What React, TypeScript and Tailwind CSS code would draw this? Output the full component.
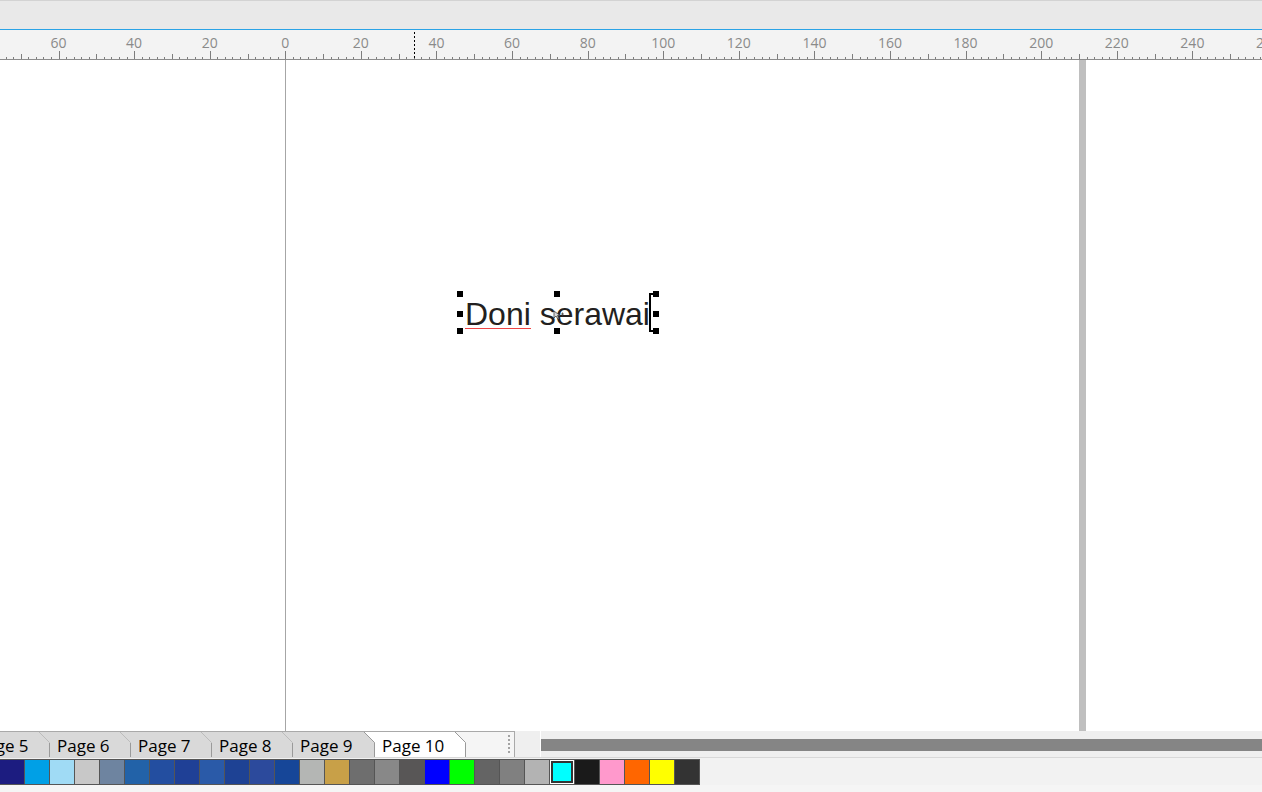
import React from "react";

const ORIGIN = 285.3;
const UNIT = 3.7795;

const labels: number[] = [];
for (let v = -60; v <= 260; v += 20) labels.push(v);

const ticks: number[] = [];
for (let v = -76; v <= 264; v += 2) ticks.push(v);

const tabs = [
  { label: "Page 5", w: 81, cls: "w-[92px]" },
  { label: "Page 6", w: 81, cls: "w-[92px]" },
  { label: "Page 7", w: 81, cls: "w-[92px]" },
  { label: "Page 8", w: 81, cls: "w-[92px]" },
  { label: "Page 9", w: 82, cls: "w-[93px]" },
  { label: "Page 10", w: 91, cls: "w-[102px]", active: true },
];

const swatches = [
  "#1c1c80", "#00a0e6", "#a0dbf5", "#c8c8c8", "#6e84a0", "#2262a8", "#234ea0",
  "#1f4096", "#2a5aa8", "#1e4294", "#2c4a9c", "#164698", "#b4b6b4", "#c8a048",
  "#6e6e6e", "#888888", "#585656", "#0000ff", "#00ff00", "#646464", "#808080",
  "#b3b3b3", "#00ffff", "#1a1a1a", "#ff99cc", "#ff6600", "#ffff00", "#333333",
];

function Ruler() {
  return (
    <div className="relative h-[30px] bg-[#f3f3f3] border-b border-[#8c8c8c] overflow-hidden font-['Open_Sans',sans-serif]">
      <svg className="absolute inset-0" width={1262} height={30}>
        {ticks.map((v) => {
          const x = Math.round(ORIGIN + UNIT * v) + 0.5;
          const h = v % 20 === 0 ? 9 : v % 10 === 0 ? 6 : 3;
          return <line key={v} x1={x} x2={x} y1={30 - h} y2={30} stroke="#7d7d7d" strokeWidth={1} />;
        })}
        <line x1={414.5} x2={414.5} y1={2} y2={30} stroke="#000" strokeWidth={1} strokeDasharray="2 2" />
      </svg>
      {labels.map((v) => (
        <span
          key={v}
          className="absolute top-[6px] -translate-x-1/2 text-[14px] leading-none text-[#8a8a8a]"
          style={{ left: ORIGIN + UNIT * v }}
        >
          {Math.abs(v)}
        </span>
      ))}
    </div>
  );
}

function Handle({ className }: { className: string }) {
  return <div className={`absolute w-[6px] h-[6px] bg-black ${className}`} />;
}

function Canvas() {
  return (
    <div className="relative flex-1 bg-white overflow-hidden">
      <div className="absolute left-[285px] top-0 bottom-0 w-px bg-[#a6a6a6]" />
      <div className="absolute left-[1079px] top-0 bottom-0 w-[7px] bg-[#bfbfbf]" />

      <span className="absolute left-[465px] top-[238px] text-[32px] leading-none text-[#231f20] font-['Liberation_Sans',Arial,sans-serif] whitespace-nowrap">
        Doni serawai
      </span>
      <div className="absolute left-[465px] top-[268px] w-[66px] h-px bg-[#ee4444]" />

      <Handle className="left-[457px] top-[231px]" />
      <Handle className="left-[554px] top-[231px]" />
      <Handle className="left-[653px] top-[231px]" />
      <Handle className="left-[457px] top-[251px]" />
      <Handle className="left-[653px] top-[251px]" />
      <Handle className="left-[457px] top-[268px]" />
      <Handle className="left-[554px] top-[268px]" />
      <Handle className="left-[653px] top-[268px]" />

      <div className="absolute left-[649px] top-[233px] w-[5px] h-[39px] border-l-2 border-t-2 border-b-2 border-black" />

      <svg className="absolute left-[553px] top-[250px]" width={12} height={10} viewBox="0 0 12 10">
        <path d="M1 1 L1 8 L3 6 L5 9 L6 8.5 L4.5 5.5 L7 5.5 Z" fill="#d9d9d9" stroke="#444" strokeWidth={0.8} />
        <path d="M8 4 L11 4 M9.5 2.5 L9.5 5.5" stroke="#444" strokeWidth={0.8} />
      </svg>
    </div>
  );
}

function PageTabs() {
  return (
    <div className="flex h-[26px] shrink-0">
      <div className="flex w-[515px] h-full border-t border-r border-[#a9a9a9] bg-[#f5f5f5] overflow-hidden">
        <div className="flex h-full -ml-[42px]">
          {tabs.map((t) => {
            const W = t.w;
            return (
              <div key={t.label} className={`relative shrink-0 h-full -mr-[11px] ${t.cls}`}>
                <svg className="absolute inset-0 overflow-visible" width={W + 11} height={25}>
                  <polygon
                    points={`0,0 ${W},0 ${W + 11},11 ${W + 11},25 11,25 11,11`}
                    fill={t.active ? "#ffffff" : "#d9d9d9"}
                  />
                  <polyline
                    points={`${W},0 ${W + 10.5},10.5 ${W + 10.5},25`}
                    fill="none"
                    stroke="#9a9a9a"
                    strokeWidth={1}
                  />
                  {t.active && (
                    <polyline points="0,0 10.5,10.5 10.5,25" fill="none" stroke="#9a9a9a" strokeWidth={1} />
                  )}
                </svg>
                <span className="absolute left-[18px] top-0 pt-px text-[17px] leading-[25px] text-black whitespace-nowrap font-['Open_Sans',sans-serif]">
                  {t.label}
                </span>
              </div>
            );
          })}
        </div>
        <div className="flex-1 flex justify-end pr-[4px] pt-[3px]">
          <div className="flex flex-col gap-[2px]">
            {[0, 1, 2, 3, 4].map((i) => (
              <div key={i} className="w-[2px] h-[2px] bg-[#a3a3a3]" />
            ))}
          </div>
        </div>
      </div>
      <div className="flex-1 bg-[#efefef] flex">
        <div className="w-[26px] h-full border-r border-white" />
        <div className="flex-1 mt-[8px] h-[12px] bg-[#858585]" />
      </div>
    </div>
  );
}

function Palette() {
  return (
    <div className="h-[28px] shrink-0 bg-[#f2f2f2] border-t border-[#d8d8d8] pt-px">
      <div className="flex w-fit -ml-px bg-[#555555] border border-[#555555] gap-px h-[26px]">
        {swatches.map((c, i) =>
          c === "#00ffff" ? (
            <div key={i} className="w-[24px] h-full bg-white p-px">
              <div className="w-full h-full border-2 border-[#333333]" style={{ background: c }} />
            </div>
          ) : (
            <div key={i} className="w-[24px] h-full" style={{ background: c }} />
          )
        )}
      </div>
    </div>
  );
}

export default function App() {
  return (
    <div className="w-[1262px] h-[792px] flex flex-col overflow-hidden bg-[#e9e9e9] font-['Open_Sans',sans-serif]">
      <div className="h-[29px] shrink-0 bg-[#e9e9e9] border-t border-[#d3d3d3]" />
      <div className="h-px shrink-0 bg-[#2aa3e6]" />
      <Ruler />
      <Canvas />
      <PageTabs />
      <Palette />
      <div className="h-[7px] shrink-0 bg-[#f5f5f5]" />
    </div>
  );
}
